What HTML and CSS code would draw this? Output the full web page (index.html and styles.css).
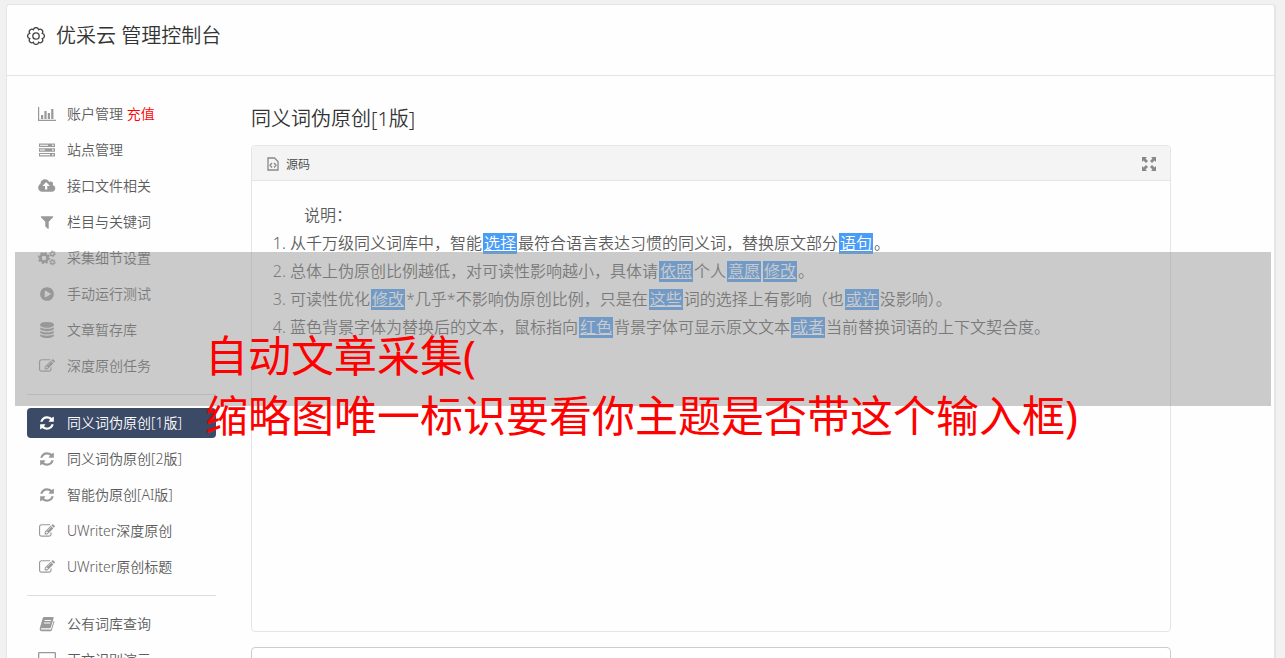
FILE: index.html
```
<!DOCTYPE html>
<html lang="zh-CN">
<head>
  <meta charset="UTF-8">
  <meta name="viewport" content="width=device-width, initial-scale=1">
  <title>优采云 管理控制台</title>
  <link rel="stylesheet" href="styles.css">
</head>
<body>
  <!-- icon set -->
  <svg class="sprite" aria-hidden="true">
    <symbol id="i-chart" viewBox="0 0 18 16">
      <path d="M0 1h1.200v12.800H18V15H0zM3 9h2.200v4H3zM6.400 5h2.200v8H6.400zM9.800 7H12v6H9.800zM13.200 3h2.200v10h-2.200z"/>
    </symbol>
    <symbol id="i-server" viewBox="0 0 16 16">
      <path fill-rule="evenodd" d="M0 1.500h16v3.600H0zM1 2.700v1.100h8V2.700zM13.200 2.600v1.400h1.400V2.600zM0 6.200h16v3.600H0zM1 7.400v1.100h5V7.400zM13.200 7.300v1.400h1.400V7.300zM0 10.900h16v3.600H0zM1 12.100v1.100h10v-1.100zM13.200 12v1.400h1.400V12z"/>
    </symbol>
    <symbol id="i-cloud" viewBox="0 0 1856 1792">
      <path d="M1216 864q0-14-9-23l-352-352q-9-9-23-9t-23 9l-351 351q-10 12-10 24 0 14 9 23t23 9h224v352q0 13 9.500 22.500t22.500 9.500h192q13 0 22.500-9.500t9.500-22.500v-352h224q13 0 22.500-9.500t9.500-22.500zm640 288q0 159-112.500 271.500t-271.500 112.500h-1088q-185 0-316.500-131.500t-131.500-316.500q0-130 70-240t188-165q-2-30-2-43 0-212 150-362t362-150q156 0 285.500 87t188.500 231q71-62 166-62 106 0 181 75t75 181q0 76-41 138 130 31 213.500 135.500t83.500 238.500z"/>
    </symbol>
    <symbol id="i-filter" viewBox="0 0 1792 1792">
      <path d="M1595 295q17 41-14 70l-493 493v742q0 42-39 59-13 5-25 5-27 0-45-19l-256-256q-19-19-19-45v-486l-493-493q-31-29-14-70 17-39 59-39h1280q42 0 59 39z"/>
    </symbol>
    <symbol id="i-cogs" viewBox="0 0 18 16">
      <g fill="none" stroke="currentColor">
        <circle cx="6" cy="8" r="3.600" stroke-width="2.600"/>
        <circle cx="6" cy="8" r="5.300" stroke-width="1.600" stroke-dasharray="2.080 2.080"/>
        <circle cx="14.500" cy="3.800" r="1.800" stroke-width="1.300"/>
        <circle cx="14.500" cy="3.800" r="2.800" stroke-width="1" stroke-dasharray="1.460 1.460"/>
        <circle cx="14.500" cy="12.200" r="1.800" stroke-width="1.300"/>
        <circle cx="14.500" cy="12.200" r="2.800" stroke-width="1" stroke-dasharray="1.460 1.460"/>
      </g>
    </symbol>
    <symbol id="i-play" viewBox="0 0 1792 1792">
      <path d="M896 128q209 0 385.500 103t279.500 279.500 103 385.500-103 385.500-279.500 279.500-385.500 103-385.500-103-279.500-279.500-103-385.500 103-385.500 279.500-279.500 385.500-103zm384 823q32-18 32-55t-32-55l-544-320q-31-19-64-1-32 19-32 56v640q0 37 32 56 16 8 32 8 17 0 32-9z"/>
    </symbol>
    <symbol id="i-database" viewBox="0 0 1792 1792">
      <path d="M896 768q237 0 443-43t325-127v170q0 69-103 128t-280 93.500-385 34.500-385-34.500-280-93.500-103-128v-170q119 84 325 127t443 43zm0 768q237 0 443-43t325-127v170q0 69-103 128t-280 93.500-385 34.500-385-34.500-280-93.500-103-128v-170q119 84 325 127t443 43zm0-384q237 0 443-43t325-127v170q0 69-103 128t-280 93.500-385 34.500-385-34.500-280-93.500-103-128v-170q119 84 325 127t443 43zm0-1152q208 0 385 34.500t280 93.500 103 128v128q0 69-103 128t-280 93.500-385 34.500-385-34.500-280-93.500-103-128v-128q0-69 103-128t280-93.500 385-34.500z"/>
    </symbol>
    <symbol id="i-edit" viewBox="0 0 1792 1792">
      <path d="M888 1184l116-116-152-152-116 116v56h96v96h56zm440-720q-16-16-33 1l-350 350q-17 17-1 33t33-1l350-350q17-17 1-33zm80 594v190q0 119-84.500 203.500t-203.500 84.500h-832q-119 0-203.500-84.500t-84.500-203.500v-832q0-119 84.500-203.500t203.500-84.500h832q63 0 117 25 15 7 18 23 3 17-9 29l-49 49q-14 14-32 8-23-6-45-6h-832q-66 0-113 47t-47 113v832q0 66 47 113t113 47h832q66 0 113-47t47-113v-126q0-13 9-22l64-64q15-15 35-7t20 29zm-96-738l288 288-672 672h-288v-288zm444 132l-92 92-288-288 92-92q28-28 68-28t68 28l152 152q28 28 28 68t-28 68z"/>
    </symbol>
    <symbol id="i-refresh" viewBox="0 0 1792 1792">
      <path d="M1639 1056q0 5-1 7-64 268-268 434.500t-478 166.500q-146 0-282.500-55t-243.500-157l-129 129q-19 19-45 19t-45-19-19-45v-448q0-26 19-45t45-19h448q26 0 45 19t19 45-19 45l-137 137q71 66 161 102t187 36q134 0 250-65t186-179q11-17 53-117 8-23 30-23h192q13 0 22.500 9.500t9.500 22.500zm25-800v448q0 26-19 45t-45 19h-448q-26 0-45-19t-19-45 19-45l138-138q-148-137-349-137-134 0-250 65t-186 179q-11 17-53 117-8 23-30 23h-199q-13 0-22.500-9.500t-9.500-22.500v-7q65-268 270-434.500t480-166.500q146 0 284 55.500t245 156.500l130-129q19-19 45-19t45 19 19 45z"/>
    </symbol>
    <symbol id="i-book" viewBox="0 0 16 16">
      <path fill-rule="evenodd" d="M5.200 1h8.600q1.200 0 .8 1.300l-2.700 9q-.3 1-1.400 1H2.700q-1 0-.8.700.2.600 1 .600h8.500q.6 0 .8-.6l2.500-8.300q.9.300.6 1.400l-2.400 7.900q-.4 1.200-1.600 1.200H2.600Q.9 15.200.7 13.400q-.1-.9.200-1.600L3.700 2.300Q4.100 1 5.200 1zM5.800 4l-.3 1h6.400l.3-1zM5.100 6.400l-.3 1h6.400l.3-1z"/>
    </symbol>
    <symbol id="i-desktop" viewBox="0 0 18 16">
      <path fill-rule="evenodd" d="M1.300 0h15.400Q18 0 18 1.300v10.400q0 1.300-1.300 1.300H11v1.500h1.500V16h-7v-1.500H7V13H1.300Q0 13 0 11.700V1.300Q0 0 1.300 0zM1.300 1.300v8.900h15.400V1.300z"/>
    </symbol>
  </svg>

  <div class="panel">
    <header class="panel-header">
      <svg class="gear" viewBox="0 0 18 18" aria-hidden="true">
        <path d="M15.280 6.400A2.650 2.650 0 0 1 15.280 11.600A2.650 2.650 0 0 1 11.600 15.280A2.650 2.650 0 0 1 6.400 15.280A2.650 2.650 0 0 1 2.720 11.600A2.650 2.650 0 0 1 2.720 6.400A2.650 2.650 0 0 1 6.400 2.720A2.650 2.650 0 0 1 11.600 2.720A2.650 2.650 0 0 1 15.280 6.400z"/>
        <circle cx="9" cy="9" r="3.200"/>
      </svg>
      <h1>优采云 管理控制台</h1>
    </header>

    <div class="panel-body">
      <nav class="sidebar">
        <a class="nav-item" href="#"><svg class="icon wide"><use href="#i-chart"/></svg><span>账户管理 <span class="recharge">充值</span></span></a>
        <a class="nav-item" href="#"><svg class="icon"><use href="#i-server"/></svg>站点管理</a>
        <a class="nav-item" href="#"><svg class="icon wide"><use href="#i-cloud"/></svg>接口文件相关</a>
        <a class="nav-item" href="#"><svg class="icon"><use href="#i-filter"/></svg>栏目与关键词</a>
        <a class="nav-item" href="#"><svg class="icon wide"><use href="#i-cogs"/></svg>采集细节设置</a>
        <a class="nav-item" href="#"><svg class="icon"><use href="#i-play"/></svg>手动运行测试</a>
        <a class="nav-item" href="#"><svg class="icon"><use href="#i-database"/></svg>文章暂存库</a>
        <a class="nav-item" href="#"><svg class="icon"><use href="#i-edit"/></svg>深度原创任务</a>
        <hr>
        <a class="nav-item active" href="#"><svg class="icon"><use href="#i-refresh"/></svg>同义词伪原创[1版]</a>
        <a class="nav-item" href="#"><svg class="icon"><use href="#i-refresh"/></svg>同义词伪原创[2版]</a>
        <a class="nav-item" href="#"><svg class="icon"><use href="#i-refresh"/></svg>智能伪原创[AI版]</a>
        <a class="nav-item" href="#"><svg class="icon"><use href="#i-edit"/></svg>UWriter深度原创</a>
        <a class="nav-item" href="#"><svg class="icon"><use href="#i-edit"/></svg>UWriter原创标题</a>
        <hr>
        <a class="nav-item" href="#"><svg class="icon"><use href="#i-book"/></svg>公有词库查询</a>
        <a class="nav-item" href="#"><svg class="icon wide"><use href="#i-desktop"/></svg>正文识别演示</a>
      </nav>

      <main class="content">
        <h2>同义词伪原创[1版]</h2>

        <section class="editor">
          <div class="toolbar">
            <button type="button" class="tool-btn">
              <svg class="source-icon" viewBox="0 0 12 14" aria-hidden="true">
                <path d="M1 1h6.500L11 4.500V13H1zM5 6L3 8.300 5 10.500M7 6l2 2.300-2 2.200"/>
              </svg>
              源码
            </button>
            <button type="button" class="tool-btn" aria-label="全屏">
              <svg class="expand-icon" viewBox="0 0 14 14" aria-hidden="true">
                <path d="M0 0h5L3.500 1.500 6 4 4 6 1.500 3.500 0 5zM14 0v5l-1.500-1.500L10 6 8 4l2.500-2.500L9 0zM0 14V9l1.500 1.500L4 8l2 2-2.500 2.500L5 14zM14 14H9l1.500-1.500L8 10l2-2 2.500 2.500L14 9z"/>
              </svg>
            </button>
          </div>
          <div class="editor-text">
            <p>说明：</p>
            <ol>
              <li>从千万级同义词库中，智能<u>选择</u>最符合语言表达习惯的同义词，替换原文部分<u>语句</u>。</li>
              <li>总体上伪原创比例越低，对可读性影响越小，具体请<u>依照</u>个人<u>意愿</u><u>修改</u>。</li>
              <li>可读性优化<u>修改</u>*几乎*不影响伪原创比例，只是在<u>这些</u>词的选择上有影响（也<u>或许</u>没影响）。</li>
              <li>蓝色背景字体为替换后的文本，鼠标指向<u>红色</u>背景字体可显示原文文本<u>或者</u>当前替换词语的上下文契合度。</li>
            </ol>
          </div>
        </section>

        <textarea class="result" aria-label="原文"></textarea>
      </main>
    </div>
  </div>

  <!-- caption band over the page -->
  <div class="caption">
    <p>自动文章采集(<br>缩略图唯一标识要看你主题是否带这个输入框)</p>
  </div>
</body>
</html>
```
FILE: styles.css
```
* {
  box-sizing: border-box;
}

body {
  margin: 0;
  padding: 4px 9px 0 6px;
  height: 100vh;
  overflow: hidden;
  position: relative;
  background-color: #f1f1f1;
  color: #5c5c5c;
  font-family: "Noto Sans", "Noto Sans CJK SC", sans-serif;
  font-size: 14px;
  font-weight: 350;
}

h1,
h2,
p {
  margin: 0;
  font-weight: 350;
}

.sprite {
  position: absolute;
  width: 0;
  height: 0;
}

.panel {
  background-color: #fefefe;
  border: 1px solid #e5e5e5;
  border-right-width: 2px;
  border-radius: 4px;
}

.panel-header {
  display: flex;
  align-items: center;
  gap: 11px;
  height: 71px;
  padding: 0 20px 8px;
  border-bottom: 1px solid #e5e5e5;
}

.gear {
  width: 18px;
  height: 18px;
  fill: none;
  stroke: #444;
  stroke-width: 1.3;
}

h1,
h2 {
  color: #333;
  font-size: 20px;
  line-height: 28px;
}

.panel-body {
  display: flex;
  gap: 35px;
  padding: 23px 103px 20px 20px;
}

/* sidebar */
.sidebar {
  display: flex;
  flex-direction: column;
  flex: none;
  gap: 6px;
  width: 189px;
}

.sidebar hr {
  width: 100%;
  height: 1px;
  margin: 7px 0;
  border: none;
  background-color: #ddd;
}

.nav-item {
  display: flex;
  align-items: center;
  height: 30px;
  padding: 0 0 2px 12px;
  border-radius: 4px;
  color: #5c5c5c;
  text-decoration: none;
}

.nav-item.active {
  background-color: #3b4a66;
  color: #fff;
}

.icon {
  width: 16px;
  height: 16px;
  margin-top: 2px;
  margin-right: 12px;
  fill: currentColor;
  color: #999;
}

.icon.wide {
  width: 18px;
  margin-left: -1px;
  margin-right: 11px;
}

.active .icon {
  color: #fff;
}

.recharge {
  color: #f00;
}

/* main column */
.content {
  flex: 1;
  min-width: 0;
}

h2 {
  margin: 6px 0 12px;
}

.editor {
  border: 1px solid #e5e5e5;
  border-radius: 4px;
}

.toolbar {
  display: flex;
  justify-content: space-between;
  align-items: center;
  height: 35px;
  padding: 2px 14px 0 15px;
  background-color: #f4f4f4;
  border-bottom: 1px solid #e5e5e5;
  border-radius: 3px 3px 0 0;
}

.tool-btn {
  display: flex;
  align-items: center;
  gap: 7px;
  padding: 0;
  border: none;
  background: none;
  color: #444;
  font: inherit;
  font-size: 12px;
  cursor: pointer;
}

.source-icon {
  width: 12px;
  height: 14px;
  fill: none;
  stroke: #888;
  stroke-width: 1.3;
}

.expand-icon {
  width: 14px;
  height: 14px;
  fill: #888;
}

.editor-text {
  min-height: 450px;
  padding: 20px;
  font-size: 16px;
  line-height: 28px;
}

.editor-text p {
  text-indent: 2em;
}

.editor-text ol {
  margin: 0;
  padding-left: 18px;
}

.editor-text u {
  display: inline-block;
  height: 21px;
  margin: 0 1px;
  padding: 0 1px;
  background-color: #4a9df6;
  color: #fff;
  line-height: 21px;
}

.result {
  display: block;
  width: 100%;
  height: 120px;
  margin-top: 15px;
  border: 1px solid #ccc;
  border-radius: 4px;
  resize: none;
}

/* caption lies over the page */
.caption {
  position: absolute;
  top: 252px;
  left: 15px;
  right: 14px;
  height: 154px;
  padding: 74px 0 0 190px;
  background-color: rgba(151, 151, 151, 0.5);
  color: #f00;
  font-size: 43px;
  line-height: 60px;
  white-space: nowrap;
}

.caption p {
  font-weight: 400;
}
```
